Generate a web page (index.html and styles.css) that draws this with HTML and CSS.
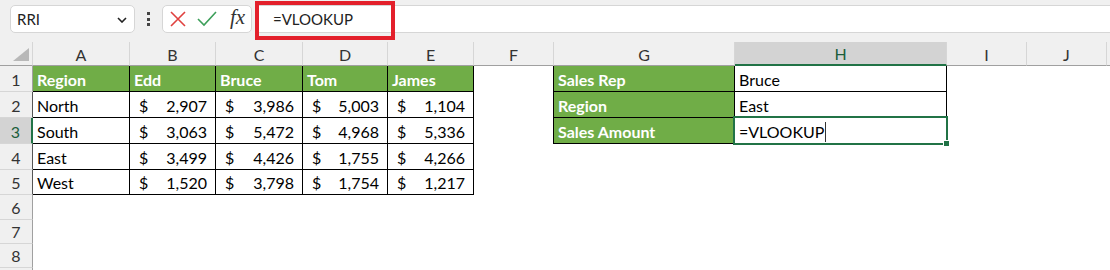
FILE: index.html
```html
<!DOCTYPE html>
<html lang="en">
<head>
    <meta charset="UTF-8">
    <meta name="viewport" content="width=device-width, initial-scale=1.0">
    <title>VLOOKUP</title>
    <link rel="stylesheet" href="styles.css">
</head>
<body>
    <div class="toolbar">
        <div class="namebox">
            <span>RRI</span>
            <svg class="chev" width="10" height="6" viewBox="0 0 10 6"><path d="M1 1 L5 5 L9 1" fill="none" stroke="#222" stroke-width="1.6"/></svg>
        </div>
        <div class="dots"><i></i><i></i><i></i></div>
        <div class="funcbox">
            <svg width="16" height="16" viewBox="0 0 16 16"><path d="M1 1 L15 15 M15 1 L1 15" stroke="#e0413f" stroke-width="1.6" fill="none"/></svg>
            <svg width="20" height="16" viewBox="0 0 20 16"><path d="M1 8 L7 14 L19 1" stroke="#3d9f5a" stroke-width="1.6" fill="none"/></svg>
            <span class="fx">fx</span>
        </div>
        <div class="formulabar">
            <span class="ftext">=VLOOKUP</span>
            <div class="mark"></div>
        </div>
    </div>

    <div class="sheet">
        <!-- column headers -->
        <div class="corner"><svg width="16" height="13" viewBox="0 0 16 13"><path d="M16 0 L16 13 L0 13 Z" fill="#b8b8b8"/></svg></div>
        <div class="ch">A</div>
        <div class="ch">B</div>
        <div class="ch">C</div>
        <div class="ch">D</div>
        <div class="ch">E</div>
        <div class="ch">F</div>
        <div class="ch">G</div>
        <div class="ch sel">H</div>
        <div class="ch">I</div>
        <div class="ch">J</div>
        <div class="ch last"></div>

        <!-- row 1 -->
        <div class="rh">1</div>
        <div class="c bd head">Region</div>
        <div class="c bd head">Edd</div>
        <div class="c bd head">Bruce</div>
        <div class="c bd head">Tom</div>
        <div class="c bd head">James</div>
        <div class="c edge"></div>
        <div class="c bd head">Sales Rep</div>
        <div class="c bd">Bruce</div>
        <div class="c"></div>
        <div class="c"></div>
        <div class="c"></div>

        <!-- row 2 -->
        <div class="rh dark">2</div>
        <div class="c bd">North</div>
        <div class="c bd acc"><span>$</span><span>2,907</span></div>
        <div class="c bd acc"><span>$</span><span>3,986</span></div>
        <div class="c bd acc"><span>$</span><span>5,003</span></div>
        <div class="c bd acc"><span>$</span><span>1,104</span></div>
        <div class="c edge"></div>
        <div class="c bd head">Region</div>
        <div class="c bd">East</div>
        <div class="c"></div>
        <div class="c"></div>
        <div class="c"></div>

        <!-- row 3 -->
        <div class="rh sel">3</div>
        <div class="c bd">South</div>
        <div class="c bd acc"><span>$</span><span>3,063</span></div>
        <div class="c bd acc"><span>$</span><span>5,472</span></div>
        <div class="c bd acc"><span>$</span><span>4,968</span></div>
        <div class="c bd acc"><span>$</span><span>5,336</span></div>
        <div class="c edge"></div>
        <div class="c bd head">Sales Amount</div>
        <div class="c bd active"><span class="typing">=VLOOKUP</span></div>
        <div class="c"></div>
        <div class="c"></div>
        <div class="c"></div>

        <!-- row 4 -->
        <div class="rh dark">4</div>
        <div class="c bd">East</div>
        <div class="c bd acc"><span>$</span><span>3,499</span></div>
        <div class="c bd acc"><span>$</span><span>4,426</span></div>
        <div class="c bd acc"><span>$</span><span>1,755</span></div>
        <div class="c bd acc"><span>$</span><span>4,266</span></div>
        <div class="c"></div>
        <div class="c"></div>
        <div class="c"></div>
        <div class="c"></div>
        <div class="c"></div>
        <div class="c"></div>

        <!-- row 5 -->
        <div class="rh dark">5</div>
        <div class="c bd">West</div>
        <div class="c bd acc"><span>$</span><span>1,520</span></div>
        <div class="c bd acc"><span>$</span><span>3,798</span></div>
        <div class="c bd acc"><span>$</span><span>1,754</span></div>
        <div class="c bd acc"><span>$</span><span>1,217</span></div>
        <div class="c"></div>
        <div class="c"></div>
        <div class="c"></div>
        <div class="c"></div>
        <div class="c"></div>
        <div class="c"></div>

        <!-- empty rows -->
        <div class="rh">6</div>
        <div class="c"></div><div class="c"></div><div class="c"></div><div class="c"></div><div class="c"></div>
        <div class="c"></div><div class="c"></div><div class="c"></div><div class="c"></div><div class="c"></div><div class="c"></div>

        <div class="rh">7</div>
        <div class="c"></div><div class="c"></div><div class="c"></div><div class="c"></div><div class="c"></div>
        <div class="c"></div><div class="c"></div><div class="c"></div><div class="c"></div><div class="c"></div><div class="c"></div>

        <div class="rh">8</div>
        <div class="c"></div><div class="c"></div><div class="c"></div><div class="c"></div><div class="c"></div>
        <div class="c"></div><div class="c"></div><div class="c"></div><div class="c"></div><div class="c"></div><div class="c"></div>

        <!-- top sliver of row 9, label hidden below the fold -->
        <div class="rh"></div>
        <div class="c"></div><div class="c"></div><div class="c"></div><div class="c"></div><div class="c"></div>
        <div class="c"></div><div class="c"></div><div class="c"></div><div class="c"></div><div class="c"></div><div class="c"></div>
    </div>
</body>
</html>
```

FILE: styles.css
```css
* {
    box-sizing: border-box;
}
body {
    margin: 0;
    height: 270px;
    overflow: hidden;
    background: #fff;
    font-family: Lato, "Liberation Sans", sans-serif;
    font-size: 16px;
    color: #000;
}

/* top bar: name box + formula bar */
.toolbar {
    height: 42px;
    background: #f0f0f0;
    display: flex;
    align-items: flex-start;
    padding-top: 5px;
}
.namebox {
    margin-left: 10px;
    width: 125px;
    height: 28px;
    background: #fff;
    border: 1px solid #d6d6d6;
    border-radius: 5px;
    display: flex;
    align-items: center;
    justify-content: space-between;
    padding: 0 7px 0 6px;
    font-size: 15px;
    color: #222;
}
.chev {
    margin-top: 2px;
}
.dots {
    width: 27px;
    height: 28px;
    display: flex;
    flex-direction: column;
    align-items: center;
    justify-content: center;
    gap: 2.5px;
}
.dots i {
    display: block;
    width: 3px;
    height: 3px;
    background: #444;
}
.funcbox {
    width: 90px;
    height: 28px;
    background: #fff;
    border: 1px solid #d6d6d6;
    border-radius: 5px;
    display: flex;
    align-items: center;
    padding-left: 7px;
    gap: 11px;
}
.fx {
    font-family: "Liberation Serif", "DejaVu Serif", serif;
    font-style: italic;
    font-size: 21px;
    color: #333;
    margin-left: 2px;
    margin-top: -3px;
}
.formulabar {
    position: relative;
    flex: 1;
    height: 28px;
    margin-left: 3px;
    background: #fff;
    border-top: 1px solid #d6d6d6;
    border-bottom: 1px solid #d6d6d6;
    display: flex;
    align-items: center;
    padding-left: 18px;
    font-size: 15px;
    color: #222;
}
/* red annotation box over the start of the formula bar */
.mark {
    position: absolute;
    left: 0;
    top: -5px;
    width: 140px;
    height: 39px;
    border: 4px solid #e3202b;
}

/* sheet grid */
.sheet {
    display: grid;
    grid-template-columns: 33px 97px 86px 87px 85px 86px 80px 181px 212px 80px 80px 1fr;
    grid-template-rows: 24px 26px 26px 26px 26px 25px 25px 24px 24px 3px;
}
.corner {
    background: #f0f0f0;
    border-right: 1px solid #d6d6d6;
    border-bottom: 1px solid #a0a0a0;
    display: flex;
    align-items: flex-end;
    justify-content: flex-end;
    padding: 0 3px 4px 0;
}
.ch {
    background: #f0f0f0;
    border-right: 1px solid #d6d6d6;
    border-bottom: 1px solid #a0a0a0;
    display: flex;
    align-items: center;
    justify-content: center;
    color: #333;
    padding-top: 1px;
}
.ch.last {
    border-right: none;
}
.ch.sel {
    background: #d3d3d3;
    border-bottom: 2px solid #217346;
    color: #1b5e3b;
}
.rh {
    background: #f0f0f0;
    border-right: 1px solid #a0a0a0;
    border-bottom: 1px solid #d6d6d6;
    display: flex;
    align-items: flex-end;
    justify-content: center;
    color: #333;
    line-height: 20px;
    padding-bottom: 1px;
}
.rh.dark {
    border-right-color: #555;
}
.rh.sel {
    background: #d3d3d3;
    border-right: 2px solid #217346;
    color: #1b5e3b;
}

/* cells */
.c {
    display: flex;
    align-items: flex-end;
    line-height: 20px;
    padding: 0 4px 1px 4px;
    white-space: nowrap;
}
.c.bd {
    border-right: 1px solid #000;
    border-bottom: 1px solid #000;
}
.c.edge {
    border-right: 1px solid #000;
}
.c.head {
    background: #70ad47;
    color: #fff;
    font-weight: bold;
}
.c.acc {
    justify-content: space-between;
    padding: 0 8px 1px 9px;
}
.c.active {
    position: relative;
}
.c.active::after {
    content: "";
    position: absolute;
    left: -2px;
    top: -2px;
    right: -2px;
    bottom: -2px;
    border: 2px solid #217346;
}
.c.active::before {
    content: "";
    position: absolute;
    right: -4px;
    bottom: -4px;
    width: 5px;
    height: 5px;
    background: #217346;
    border: 1px solid #fff;
    z-index: 1;
}
.typing {
    border-right: 1px solid #333;
    padding-right: 1px;
}
```
